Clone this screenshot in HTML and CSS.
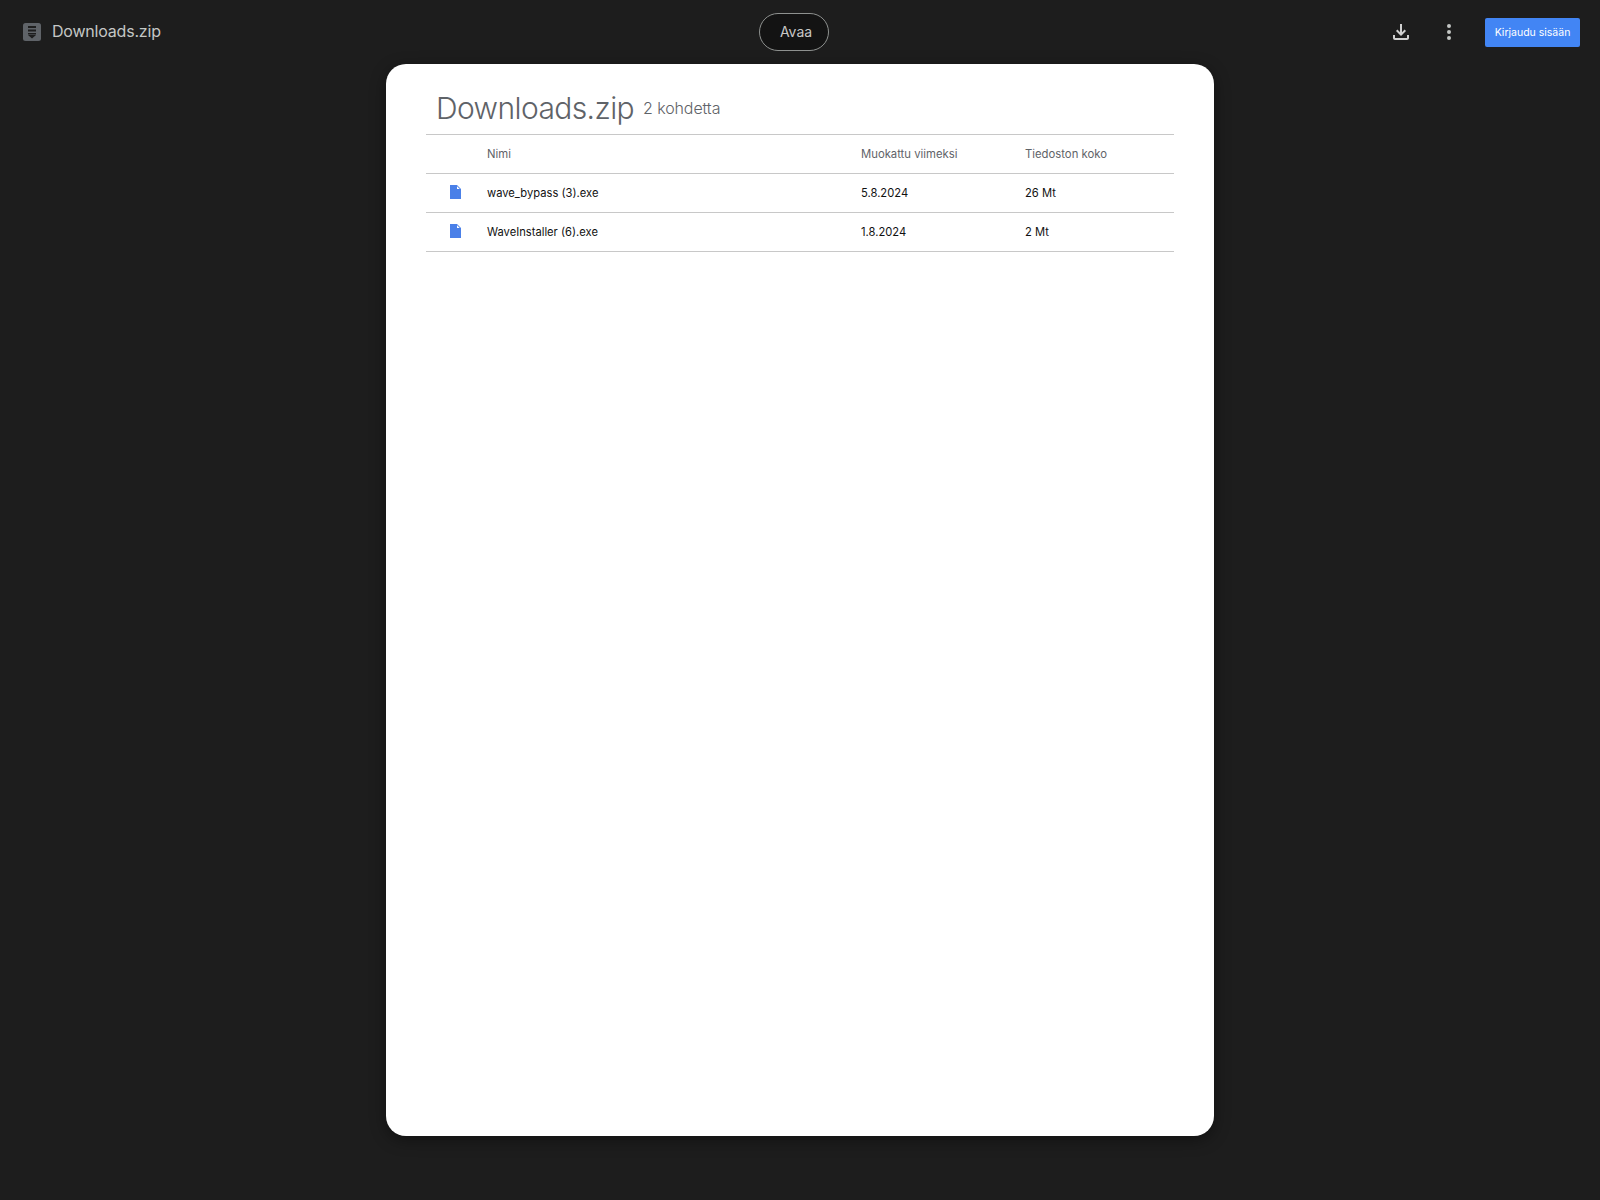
FILE: index.html
```html
<!DOCTYPE html>
<html lang="fi">
<head>
<meta charset="utf-8">
<title>Downloads.zip</title>
<link rel="stylesheet" href="styles.css">
</head>
<body>
<header class="topbar">
  <div class="file">
    <svg class="zip-icon" width="18" height="18" viewBox="0 0 18 18"><rect width="18" height="18" rx="2.500" fill="#5f6368"/><path d="M5 3h8v2H5zM5 6.500h8v2H5zM5 10h8v1.500H5zM5 12h8l-4 3.500z" fill="#1e1e1e"/></svg>
    <span class="file-name">Downloads.zip</span>
  </div>
  <div class="center"><button class="open">Avaa</button></div>
  <div class="actions">
    <svg class="act dl" width="24" height="24" viewBox="0 0 24 24"><path d="M18 15v3H6v-3H4v3c0 1.100.9 2 2 2h12c1.100 0 2-.9 2-2v-3h-2zm-1-4-1.410-1.410L13 12.170V4h-2v8.170L8.410 9.590 7 11l5 5 5-5z" fill="#d0d0d0"/></svg>
    <svg class="act more" width="24" height="24" viewBox="0 0 24 24"><path d="M12 8a2 2 0 1 0 0-4 2 2 0 0 0 0 4zm0 2a2 2 0 1 0 0 4 2 2 0 0 0 0-4zm0 6a2 2 0 1 0 0 4 2 2 0 0 0 0-4z" fill="#c4c7c5"/></svg>
    <button class="signin">Kirjaudu sisään</button>
  </div>
</header>
<main class="card">
  <div class="heading">
    <h1>Downloads.zip</h1>
    <span class="count">2 kohdetta</span>
  </div>
  <table class="files">
    <thead>
      <tr><th class="c-icon"></th><th class="c-name">Nimi</th><th class="c-date">Muokattu viimeksi</th><th>Tiedoston koko</th></tr>
    </thead>
    <tbody>
      <tr>
        <td class="c-icon"><svg class="doc" width="11" height="14" viewBox="0 0 11 14"><path d="M0 0h7l4 4v10H0z" fill="#4a80e8"/><path d="M7 1.200V4h2.800z" fill="#fff"/></svg></td>
        <td>wave_bypass (3).exe</td><td>5.8.2024</td><td>26 Mt</td>
      </tr>
      <tr>
        <td class="c-icon"><svg class="doc" width="11" height="14" viewBox="0 0 11 14"><path d="M0 0h7l4 4v10H0z" fill="#4a80e8"/><path d="M7 1.200V4h2.800z" fill="#fff"/></svg></td>
        <td>WaveInstaller (6).exe</td><td>1.8.2024</td><td>2 Mt</td>
      </tr>
    </tbody>
  </table>
</main>
</body>
</html>
```
FILE: styles.css
```css
* { box-sizing: border-box; }
html, body { height: 100%; }
body {
  margin: 0;
  background: #1d1d1d;
  font-family: "Inter", "Roboto", "Liberation Sans", sans-serif;
  overflow: hidden;
}
.topbar {
  height: 64px;
  display: grid;
  grid-template-columns: 759px 70px 1fr;
  align-items: center;
}
.file { display: flex; align-items: center; padding-left: 23px; gap: 11px; }
.zip-icon { flex: none; }
.file-name { color: #c4c7c5; font-size: 16px; letter-spacing: -0.2px; line-height: 20px; margin-top: -2px; }
.center { display: flex; }
.open {
  width: 70px;
  height: 38px;
  border-radius: 19px;
  border: 1px solid #8e918f;
  background: #131313;
  color: #c7c7c7;
  font: 14px "Inter", "Roboto", sans-serif;
  padding: 0 0 2px 4px;
}
.actions { display: flex; align-items: center; justify-content: flex-end; padding-right: 20px; }
.act { flex: none; }
.dl { margin-right: 24px; }
.more { margin-right: 24px; }
.signin {
  width: 95px;
  height: 29px;
  border: 0;
  border-radius: 2px;
  background: #4285f4;
  color: #fff;
  font: 400 10.500px "Inter", "Roboto", sans-serif;
  padding: 0;
}
.card {
  width: 828px;
  height: 1072px;
  margin-left: 386px;
  background: #fff;
  border-radius: 20px;
  box-shadow: 0 4px 16px rgba(0,0,0,.4);
  padding: 0 40px;
}
.heading {
  height: 70px;
  display: flex;
  align-items: baseline;
  gap: 9px;
  padding: 24px 0 0 10px;
  color: #5f6368;
}
h1 { margin: 0; font-size: 30px; font-weight: 300; letter-spacing: -0.6px; line-height: 40px; }
.count { font-size: 16px; font-weight: 300; letter-spacing: -0.1px; position: relative; top: -5px; }
.files { width: 748px; border-collapse: collapse; table-layout: fixed; font-size: 11.200px; }
.files th, .files td {
  height: 39px;
  padding: 0;
  text-align: left;
  border-top: 1px solid #c8c8c8;
  border-bottom: 1px solid #c8c8c8;
}
.files th { font-weight: 400; color: #5f6368; font-size: 11.300px; }
.files td { color: #111; }
.c-icon { width: 61px; padding-left: 24px !important; }
.c-name { width: 374px; }
.c-date { width: 164px; }
.doc { display: block; margin-top: -3px; }
```
